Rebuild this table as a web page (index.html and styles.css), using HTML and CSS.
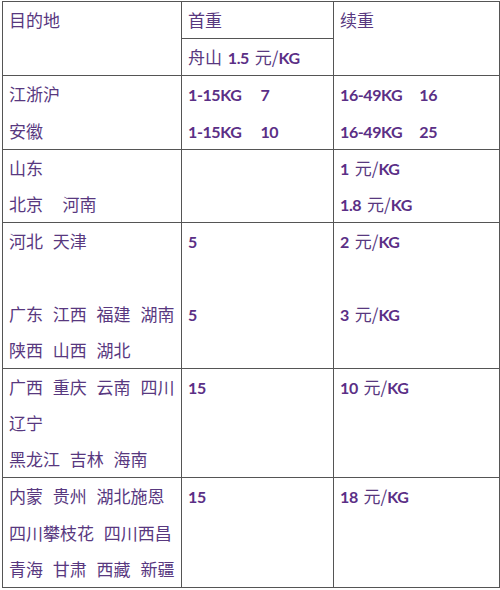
FILE: index.html
```html
<!DOCTYPE html>
<html lang="zh">
<head>
<meta charset="utf-8">
<title>运费表</title>
<link rel="stylesheet" href="styles.css">
</head>
<body>
<table class="rates">
  <colgroup>
    <col class="c1"><col class="c2"><col class="c3">
  </colgroup>
  <tr>
    <td rowspan="2" class="dest"><div class="ln">目的地</div></td>
    <td><div class="ln">首重</div></td>
    <td rowspan="2"><div class="ln">续重</div></td>
  </tr>
  <tr>
    <td><div class="ln">舟山 <b>1.5</b> 元/<b>KG</b></div></td>
  </tr>
  <tr>
    <td class="dest"><div class="ln">江浙沪</div><div class="ln">安徽</div></td>
    <td><div class="ln"><b>1-15KG</b><b class="n1">7</b></div><div class="ln"><b>1-15KG</b><b class="n1">10</b></div></td>
    <td><div class="ln"><b>16-49KG</b><b class="n2">16</b></div><div class="ln"><b>16-49KG</b><b class="n2">25</b></div></td>
  </tr>
  <tr>
    <td class="dest"><div class="ln">山东</div><div class="ln">北京&nbsp; 河南</div></td>
    <td></td>
    <td><div class="ln"><b>1</b> 元/<b>KG</b></div><div class="ln"><b>1.8</b> 元/<b>KG</b></div></td>
  </tr>
  <tr>
    <td class="dest"><div class="ln">河北 天津</div><div class="ln"></div><div class="ln">广东 江西 福建 湖南</div><div class="ln">陕西 山西 湖北</div></td>
    <td><div class="ln"><b>5</b></div><div class="ln"></div><div class="ln"><b>5</b></div></td>
    <td><div class="ln"><b>2</b> 元/<b>KG</b></div><div class="ln"></div><div class="ln"><b>3</b> 元/<b>KG</b></div></td>
  </tr>
  <tr>
    <td class="dest"><div class="ln">广西 重庆 云南 四川</div><div class="ln">辽宁</div><div class="ln">黑龙江 吉林 海南</div></td>
    <td><div class="ln"><b>15</b></div></td>
    <td><div class="ln"><b>10</b> 元/<b>KG</b></div></td>
  </tr>
  <tr>
    <td class="dest"><div class="ln">内蒙 贵州 湖北施恩</div><div class="ln">四川攀枝花 四川西昌</div><div class="ln">青海 甘肃 西藏 新疆</div></td>
    <td><div class="ln"><b>15</b></div></td>
    <td><div class="ln"><b>18</b> 元/<b>KG</b></div></td>
  </tr>
</table>
</body>
</html>
```
FILE: styles.css
```css
html, body {
  margin: 0;
  padding: 0;
  background: #ffffff;
}
body {
  font-family: "Noto Sans CJK SC", "Noto Sans", sans-serif;
  font-size: 17px;
  color: #58387f;
}
.rates {
  border-collapse: collapse;
  margin: 1px 0 0 2px;
  width: 497px;
  table-layout: fixed;
}
.c1 { width: 179px; }
.c2 { width: 152px; }
.c3 { width: 166px; }
.rates td {
  border: 1.5px solid #555555;
  vertical-align: top;
  padding: 0 0 0 6px;
  white-space: nowrap;
  overflow: hidden;
}
.ln {
  height: 36.2px;
  line-height: 36.2px;
  word-spacing: 2px;
}
.dest .ln {
  word-spacing: 6px;
}
.rates b {
  font-family: "Lato", "Liberation Sans", sans-serif;
  font-weight: 700;
  font-size: 16px;
  letter-spacing: -0.4px;
  color: #5b2f86;
  word-spacing: 0;
}
.n1 { margin-left: 19px; }
.n2 { margin-left: 17px; }
```
